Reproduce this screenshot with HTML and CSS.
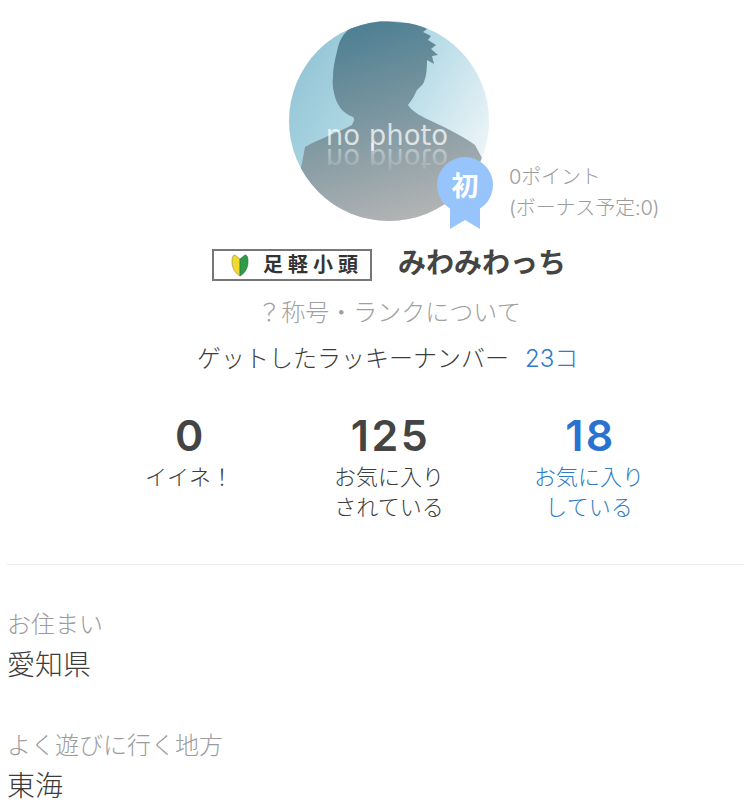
FILE: index.html
```html
<!DOCTYPE html>
<html lang="ja">
<head>
<meta charset="utf-8">
<title>プロフィール</title>
<link rel="stylesheet" href="styles.css">
</head>
<body>
<main class="page">
  <section class="hero">
    <div class="avatar">
      <svg class="photo" viewBox="0 0 200 200" width="200" height="200">
        <defs>
          <linearGradient id="bg" x1="0" y1="0.15" x2="1" y2="0.75">
            <stop offset="0" stop-color="#8fc3d4"/>
            <stop offset="0.55" stop-color="#bbdde8"/>
            <stop offset="1" stop-color="#f3f8fa"/>
          </linearGradient>
          <linearGradient id="body" x1="0.35" y1="0" x2="0.65" y2="1">
            <stop offset="0" stop-color="#4c7e92"/>
            <stop offset="0.5" stop-color="#7f98a1"/>
            <stop offset="1" stop-color="#b5b5b5"/>
          </linearGradient>
          <linearGradient id="fade" x1="0" y1="0" x2="0" y2="1">
            <stop offset="0" stop-color="#fff" stop-opacity="0"/>
            <stop offset="1" stop-color="#fff" stop-opacity="0.5"/>
          </linearGradient>
          <clipPath id="round"><circle cx="100" cy="100" r="100"/></clipPath>
        </defs>
        <g clip-path="url(#round)">
          <rect width="200" height="200" fill="url(#bg)"/>
          <path fill="url(#body)" d="M59 9 C68 3 80 0 92 0 L130 3 L138 8 L134 11 L142 15 L139 19 L147 24 L142 28 L149 34 L143 35 L145 43 L138 39 C138 50 137 57 134 63 L128 69 L124 77 L119 84 C123 90 130 94 138 98 C155 106 172 114 186 124 L200 150 L200 200 L0 200 L13 142 L16 126 C30 118 48 112 63 104 C65 100 66 98 64 96 C54 92 50 86 47 79 C44 70 43 62 44 56 C44 45 47 35 49 26 C51 18 55 13 59 9 Z"/>
          <text class="photo-text" x="98" y="124" text-anchor="middle" fill="#ffffff" fill-opacity="0.72">no photo</text>
          <text class="photo-text" x="98" y="-128" text-anchor="middle" transform="scale(1,-1)" fill="url(#fade)">no photo</text>
        </g>
      </svg>
      <div class="rank">
        <svg class="rank-mark" viewBox="0 0 56 72" width="56" height="72">
          <path fill="#96c4fb" d="M13 40 H43 V72 L28 63 L13 72 Z"/>
          <circle cx="28" cy="28" r="28" fill="#96c4fb"/>
        </svg>
        <span class="rank-text">初</span>
      </div>
    </div>
    <div class="points">
      <p class="points-line">0ポイント</p>
      <p class="points-line">(ボーナス予定:0)</p>
    </div>
  </section>

  <section class="identity">
    <div class="title-badge">
      <svg class="leaf" viewBox="0 0 18 24" width="18" height="24">
        <path fill="#f2d92e" stroke="#8a8a3a" stroke-width="0.6" d="M9 6 L4 2 C1.500 2 1 5 1 9 C1 15 4 20 9 23 Z"/>
        <path fill="#2f9a4a" stroke="#2c6b3a" stroke-width="0.6" d="M9 6 L14 2 C16.500 2 17 5 17 9 C17 15 14 20 9 23 Z"/>
      </svg>
      <span class="title-text">足軽小頭</span>
    </div>
    <h1 class="name">みわみわっち</h1>
  </section>

  <p class="rank-help">？称号・ランクについて</p>

  <p class="lucky">
    <span class="lucky-label">ゲットしたラッキーナンバー</span>
    <a class="lucky-count">23コ</a>
  </p>

  <section class="stats">
    <div class="stat">
      <div class="stat-num">0</div>
      <div class="stat-label">イイネ！</div>
    </div>
    <div class="stat">
      <div class="stat-num">125</div>
      <div class="stat-label">お気に入り<br>されている</div>
    </div>
    <div class="stat stat-link">
      <div class="stat-num">18</div>
      <div class="stat-label">お気に入り<br>している</div>
    </div>
  </section>

  <hr class="divider">

  <dl class="details">
    <dt class="detail-key">お住まい</dt>
    <dd class="detail-value">愛知県</dd>
    <dt class="detail-key">よく遊びに行く地方</dt>
    <dd class="detail-value">東海</dd>
  </dl>
</main>
</body>
</html>
```
FILE: styles.css
```css
* { box-sizing: border-box; }
html, body { margin: 0; padding: 0; background: #fff; }
body {
  width: 744px;
  height: 810px;
  overflow: hidden;
  font-family: "Inter", "Noto Sans CJK JP", sans-serif;
  font-weight: 300;
  color: #3c3c3c;
}
p, h1, dl, dt, dd { margin: 0; font-weight: 300; }
.page { display: flex; flex-direction: column; }

.hero {
  display: flex;
  align-items: flex-start;
  padding: 21px 0 0 289px;
  height: 229px;
}
.avatar { position: relative; width: 200px; height: 200px; flex: none; }
.photo { display: block; }
.photo-text {
  font-family: "DejaVu Sans", sans-serif;
  font-size: 27.500px;
  font-weight: 400;
}
.rank { position: absolute; left: 148px; top: 136px; width: 56px; height: 72px; }
.rank-mark { display: block; }
.rank-text {
  position: absolute;
  left: 0;
  top: 15px;
  width: 56px;
  text-align: center;
  color: #fff;
  font-size: 27px;
  font-weight: 700;
  line-height: 30px;
}
.points {
  display: flex;
  flex-direction: column;
  gap: 1px;
  margin: 141px 0 0 20px;
  font-size: 20px;
  line-height: 30px;
  letter-spacing: -0.150px;
  color: #9c9c9c;
  white-space: nowrap;
}

.identity {
  display: flex;
  align-items: center;
  height: 40px;
  margin-top: 14px;
  padding-left: 212px;
}
.title-badge {
  display: flex;
  align-items: center;
  width: 160px;
  height: 32px;
  margin-top: 4px;
  border: 2px solid #777;
  padding-left: 17px;
  background: #fff;
}
.leaf { flex: none; }
.title-text {
  margin-left: 14px;
  font-size: 20px;
  font-weight: 700;
  letter-spacing: 5px;
  line-height: 1;
  color: #333;
  white-space: nowrap;
}
.name {
  margin-left: 26px;
  font-size: 28px;
  font-weight: 700;
  line-height: 40px;
  color: #444;
}
.rank-help {
  margin-top: 12px;
  padding-left: 34px;
  text-align: center;
  font-size: 24px;
  line-height: 36px;
  color: #a0a0a0;
}
.lucky {
  display: flex;
  gap: 16px;
  margin-top: 10px;
  padding-left: 197px;
  font-size: 24px;
  line-height: 36px;
}
.lucky-count { color: #2f7acb; }

.stats {
  display: flex;
  margin-top: 32px;
  padding-left: 89px;
}
.stat { width: 200px; text-align: center; }
.stat-num {
  font-size: 43px;
  font-weight: 600;
  line-height: 52px;
  letter-spacing: 2.500px;
  text-indent: 3px;
  color: #444;
}
.stat-label { font-size: 22px; line-height: 30px; margin-top: 1px; }
.stat-link .stat-num { color: #2a72d0; }
.stat-link .stat-label { color: #2f7ac4; }

.divider {
  width: 737px;
  height: 1px;
  margin: 42px 0 0 7px;
  border: 0;
  background: #ececec;
}
.details { padding: 42px 0 0 7px; }
.detail-key {
  font-size: 24px;
  line-height: 36px;
  color: #9c9c9c;
}
.detail-value {
  margin: 2px 0 43px;
  font-size: 28px;
  line-height: 40px;
}
```
